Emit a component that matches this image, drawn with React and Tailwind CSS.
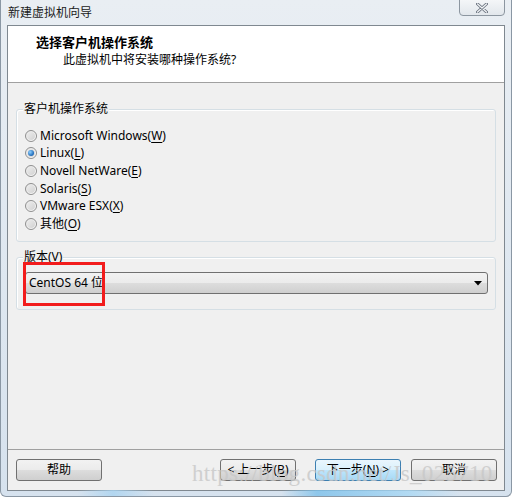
const ui = { fontFamily: '"Noto Sans", "Noto Sans CJK SC", sans-serif' };

const systems = [
  { label: "Microsoft Windows", key: "W" },
  { label: "Linux", key: "L", checked: true },
  { label: "Novell NetWare", key: "E" },
  { label: "Solaris", key: "S" },
  { label: "VMware ESX", key: "X" },
  { label: "其他", key: "O" },
];

function Radio({ checked }) {
  return (
    <span className="relative flex h-[12px] w-[12px] shrink-0 items-center justify-center rounded-full border border-[#8f8f8f] bg-gradient-to-br from-[#e6e6e6] to-[#fbfbfb]">
      <span className="h-[8px] w-[8px] rounded-full bg-gradient-to-br from-[#ececec] to-[#d2d2d2]" />
      {checked && (
        <span className="absolute h-[6px] w-[6px] rounded-full bg-[radial-gradient(circle_at_35%_35%,#8fd0ff,#1b68b8_70%)]" />
      )}
    </span>
  );
}

function Hotkey({ k }) {
  return (
    <>
      (<span className="underline underline-offset-2">{k}</span>)
    </>
  );
}

function WinButton({ children, width, primary }) {
  return (
    <button
      type="button"
      className={`flex h-[22px] items-center justify-center rounded-[3px] border text-[12px] text-black ${width} ${
        primary
          ? "border-[#3c7fb1] bg-[linear-gradient(#eaf6fd_0%,#d9f0fc_50%,#bee6fd_50%,#a7d9f5_100%)]"
          : "border-[#707070] bg-[linear-gradient(#f2f2f2_0%,#ebebeb_50%,#dddddd_50%,#cfcfcf_100%)]"
      }`}
    >
      {children}
    </button>
  );
}

export default function App() {
  return (
    <div
      style={ui}
      className="relative flex h-[497px] w-[512px] flex-col overflow-hidden rounded-b-[6px] border-x border-b border-[#8a97a4] bg-[linear-gradient(180deg,#e9eef3_0%,#e1e9f1_40%,#d6e2ee_100%)] text-black"
    >
      {/* title bar */}
      <div className="flex h-[25px] items-center pl-[7px] text-[12px] leading-none text-[#1a1a1a]">
        新建虚拟机向导
      </div>
      <div className="absolute right-[6px] top-[-1px] flex h-[17px] w-[46px] items-center justify-center rounded-b-[4px] border border-[#8c96a0] bg-gradient-to-b from-[#f4f6f8] to-[#e2e7ec]">
        <svg width="12" height="10" viewBox="0 0 12 10">
          <path d="M1.5 1 L10.5 9 M10.5 1 L1.5 9" stroke="#6b7480" strokeWidth="3" strokeLinecap="round" />
          <path d="M1.5 1 L10.5 9 M10.5 1 L1.5 9" stroke="#f4f6f8" strokeWidth="1.2" strokeLinecap="round" />
        </svg>
      </div>

      {/* client area */}
      <div className="mx-[6px] mb-[5px] flex flex-1 flex-col border border-[#7f8890] bg-[#f0f0f0]">
        <div className="h-[57px] border-b border-[#a0a0a0] bg-white pl-[28px] pt-[8px]">
          <div className="text-[13px] font-bold leading-[17px]">选择客户机操作系统</div>
          <div className="pl-[27px] pt-[1px] text-[12px] leading-[16px]">此虚拟机中将安装哪种操作系统?</div>
        </div>

        <div className="flex flex-1 flex-col px-[8px]">
          <div className="relative mt-[26px] h-[133px] rounded-[3px] border border-[#d5dfe5] pl-[8px] pt-[17px] shadow-[inset_1px_1px_0_#fff]">
            <span className="absolute left-[6px] top-[-9px] bg-[#f0f0f0] px-[1px] text-[12px] leading-[16px]">
              客户机操作系统
            </span>
            {systems.map((s) => (
              <div key={s.key} className="flex h-[17.6px] items-center gap-[3px] text-[12px]">
                <Radio checked={s.checked} />
                <span>
                  {s.label}
                  <Hotkey k={s.key} />
                </span>
              </div>
            ))}
          </div>

          <div className="relative mt-[15px] h-[53px] rounded-[3px] border border-[#d5dfe5] pl-[8px] pr-[7px] pt-[14px] shadow-[inset_1px_1px_0_#fff]">
            <span className="absolute left-[6px] top-[-9px] bg-[#f0f0f0] px-[1px] text-[12px] leading-[16px]">
              版本(<span className="underline underline-offset-2">V</span>)
            </span>
            <div className="flex h-[22px] items-center justify-between rounded-[3px] border border-[#707070] bg-[linear-gradient(#f2f2f2_0%,#ebebeb_50%,#dddddd_50%,#cfcfcf_100%)] pl-[3px] pr-[5px] text-[12px]">
              <span>CentOS 64 位</span>
              <svg width="8" height="5" viewBox="0 0 8 5">
                <path d="M0 0 H8 L4 4.5 Z" fill="#000" />
              </svg>
            </div>
            <div className="absolute left-[6px] top-[4px] h-[44px] w-[82px] border-[3px] border-[#f21c1c]" />
          </div>
        </div>

        <div className="flex h-[41px] items-start border-t border-[#a0a0a0] pl-[8px] pr-[7px] pt-[9px]">
          <WinButton width="w-[86px]">帮助</WinButton>
          <div className="ml-auto flex">
            <WinButton width="w-[76px]">
              &lt; 上一步<Hotkey k="B" />
            </WinButton>
            <div className="ml-[19px]">
              <WinButton width="w-[86px]" primary>
                下一步<Hotkey k="N" /> &gt;
              </WinButton>
            </div>
            <div className="ml-[10px]">
              <WinButton width="w-[86px]">取消</WinButton>
            </div>
          </div>
        </div>
      </div>

      {/* bottom frame glow */}
      <div className="pointer-events-none absolute bottom-0 left-0 right-0 h-[6px] bg-[linear-gradient(90deg,transparent_15%,#a9d3f0_22%,transparent_30%,transparent_55%,#7cc0ea_62%,#a9d8f4_80%,transparent_90%)] opacity-80" />

      {/* watermark */}
      <div
        style={{ fontFamily: '"Liberation Serif", serif' }}
        className="pointer-events-none absolute left-[191px] top-[462px] text-[23px] leading-none tracking-[0.3px] text-[#c8c8c8] opacity-80"
      >
        https://blog.csdn.net/Js_025710
      </div>
    </div>
  );
}
